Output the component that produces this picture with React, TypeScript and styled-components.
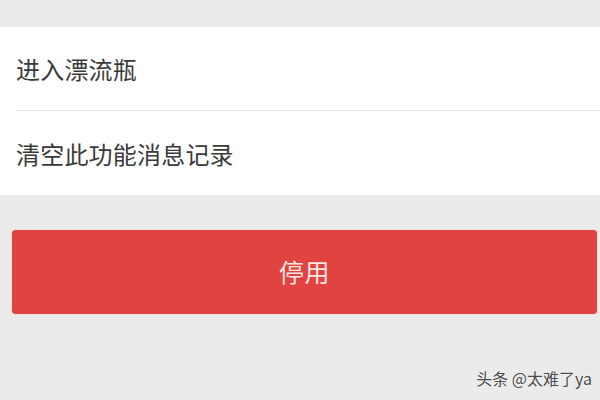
import React from "react";
import styled, { createGlobalStyle } from "styled-components";

const Global = createGlobalStyle`
  html, body { margin: 0; padding: 0; background: #ebebeb; }
  body { font-family: "Noto Sans CJK SC", "Noto Sans", sans-serif; }
`;

const Page = styled.div`
  width: 600px;
  height: 400px;
  background: #ebebeb;
  display: flex;
  flex-direction: column;
  padding-top: 27px;
  box-sizing: border-box;
  position: relative;
  overflow: hidden;
`;

const Panel = styled.div`
  background: #ffffff;
  display: flex;
  flex-direction: column;
  padding-left: 16px;
`;

const Row = styled.div<{ $divider?: boolean }>`
  height: ${(p) => (p.$divider ? 83 : 84)}px;
  display: flex;
  align-items: center;
  font-size: 24px;
  color: #3a3a3a;
  letter-spacing: 0.2px;
  border-bottom: ${(p) => (p.$divider ? "1px solid #e6e6e6" : "none")};
`;

const ButtonWrap = styled.div`
  padding: 35px 3px 0 12px;
`;

const StopButton = styled.div`
  height: 84px;
  border-radius: 4px;
  background: #e14341;
  display: flex;
  align-items: center;
  justify-content: center;
  padding-bottom: 3px;
  box-sizing: border-box;
  color: #fbe6e4;
  font-size: 25px;
  letter-spacing: 0.5px;
  box-shadow: 0 0 1px rgba(180, 40, 40, 0.5);
`;

const Watermark = styled.div`
  position: absolute;
  right: 8px;
  bottom: 10px;
  font-size: 16px;
  color: #4a4a4a;
  text-shadow: 0 0 2px #ffffff;
`;

export default function App() {
  return (
    <>
      <Global />
      <Page>
        <Panel>
          <Row $divider>进入漂流瓶</Row>
          <Row>清空此功能消息记录</Row>
        </Panel>
        <ButtonWrap>
          <StopButton>停用</StopButton>
        </ButtonWrap>
        <Watermark>头条 @太难了ya</Watermark>
      </Page>
    </>
  );
}
